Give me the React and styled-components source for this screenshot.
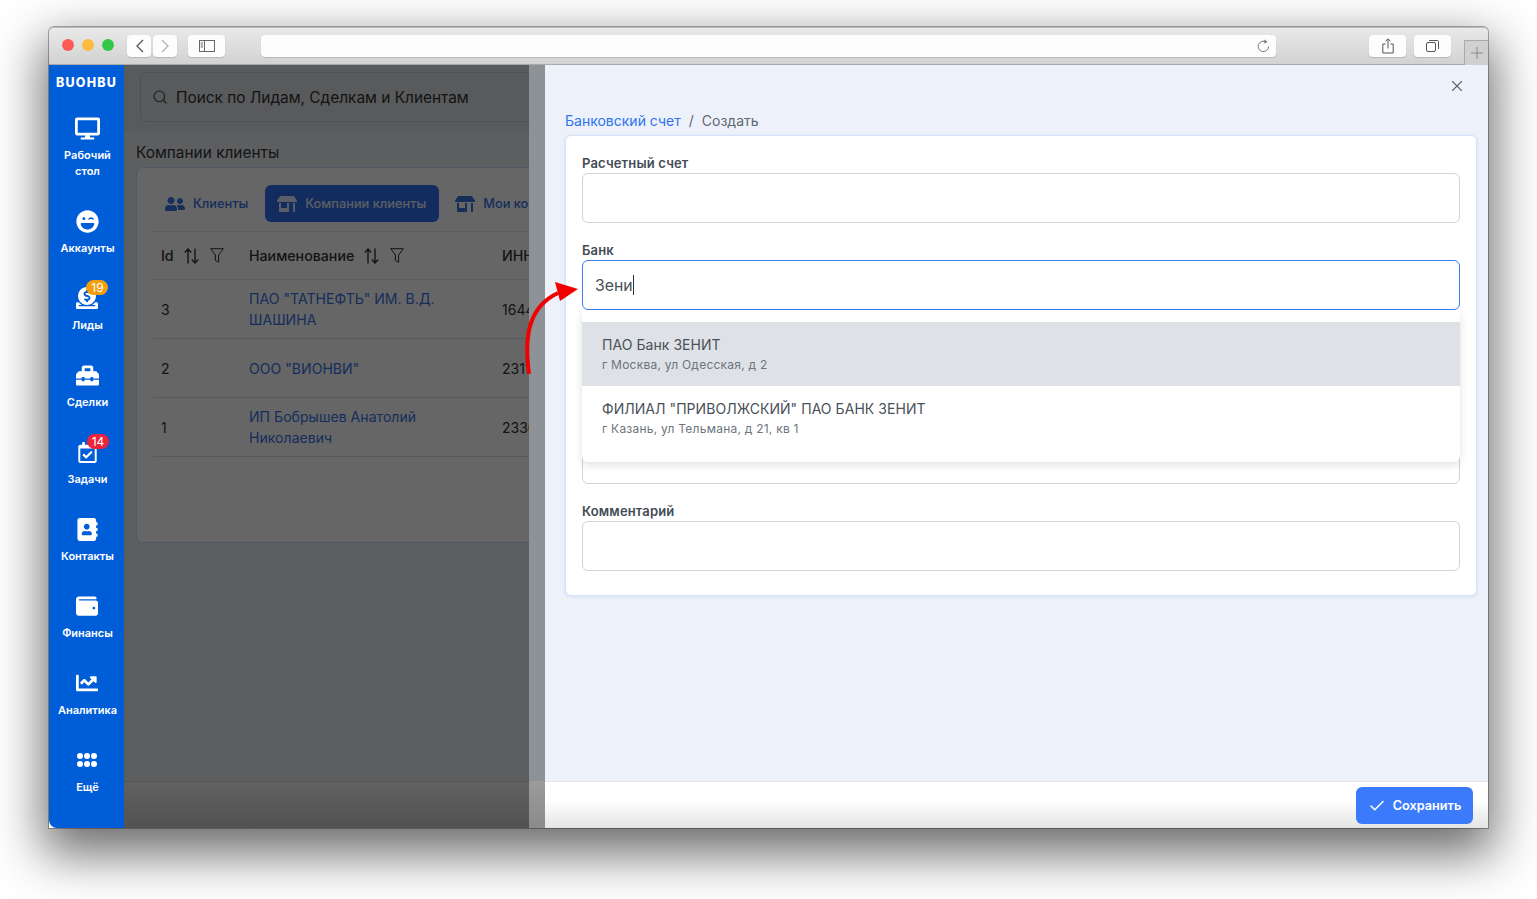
import React from 'react'
import styled, { createGlobalStyle } from 'styled-components'
import {
  FaDesktop, FaLaughWink, FaDonate, FaToolbox, FaRegCalendarCheck,
  FaAddressBook, FaWallet, FaChartLine, FaUserFriends, FaStoreAlt,
} from 'react-icons/fa'
import { FiSearch, FiX, FiCheck } from 'react-icons/fi'

const GlobalStyle = createGlobalStyle`
  html, body { margin: 0; padding: 0; background: #fff; }
  body { font-family: Inter, "Noto Sans", sans-serif; width: 1537px; height: 899px; overflow: hidden; }
  * { box-sizing: border-box; }
`

const navItems = [
  { label: <>Рабочий<br />стол</>, icon: <FaDesktop size={25} /> },
  { label: 'Аккаунты', icon: <FaLaughWink size={23} /> },
  { label: 'Лиды', icon: <FaDonate size={22} />, badge: '19', badgeColor: '#f59e0b' },
  { label: 'Сделки', icon: <FaToolbox size={23} /> },
  { label: 'Задачи', icon: <FaRegCalendarCheck size={21} />, badge: '14', badgeColor: '#f0233c' },
  { label: 'Контакты', icon: <FaAddressBook size={23} /> },
  { label: 'Финансы', icon: <FaWallet size={22} /> },
  { label: 'Аналитика', icon: <FaChartLine size={22} /> },
  { label: 'Ещё', icon: <DotsIcon /> },
]

const rows = [
  { id: '3', name: <>ПАО "ТАТНЕФТЬ" ИМ. В.Д.<br />ШАШИНА</>, inn: '1644003838' },
  { id: '2', name: 'ООО "ВИОНВИ"', inn: '2311230529' },
  { id: '1', name: <>ИП Бобрышев Анатолий<br />Николаевич</>, inn: '233008371800' },
]

function DotsIcon() {
  return (
    <svg width="20" height="14" viewBox="0 0 20 14" fill="currentColor">
      {[3, 10, 17].map(x => [3, 11].map(y => <circle key={x + '-' + y} cx={x} cy={y} r="3" />))}
    </svg>
  )
}

function SortIcon() {
  return (
    <svg width="15" height="16" viewBox="0 0 15 16" fill="none" stroke="currentColor" strokeWidth="1.4">
      <path d="M4 15.5V1M0.8 4.4L4 1l3.2 3.4" />
      <path d="M11 .5V15M7.8 11.6L11 15l3.2-3.4" />
    </svg>
  )
}

function FilterIcon() {
  return (
    <svg width="14" height="15" viewBox="0 0 14 15" fill="none" stroke="currentColor" strokeWidth="1">
      <path d="M.7.7h12.6L8.6 7v7.2L5.4 12.4V7z" strokeLinejoin="round" />
    </svg>
  )
}

function HeaderTools() {
  return (
    <HeadTools>
      <SortIcon />
      <FilterIcon />
    </HeadTools>
  )
}

function BankField({ label, focused, value }) {
  return (
    <Field>
      <FieldLabel>{label}</FieldLabel>
      <InputBox $focused={focused}>
        {value}
        {focused && <Caret />}
      </InputBox>
    </Field>
  )
}

export default function App() {
  return (
    <>
      <GlobalStyle />
      <Page>
        <Win>
          <Toolbar>
            <Lights>
              <Light $c="#fc5b57" />
              <Light $c="#fdbc40" />
              <Light $c="#34c84a" />
            </Lights>
            <NavPair>
              <ToolBtn $w={24}>
                <svg width="9" height="14" viewBox="0 0 9 14" fill="none" stroke="#555" strokeWidth="1.3"><path d="M8 1L2 7l6 6" /></svg>
              </ToolBtn>
              <ToolBtn $w={24}>
                <svg width="9" height="14" viewBox="0 0 9 14" fill="none" stroke="#b4b4b4" strokeWidth="1.3"><path d="M1 1l6 6-6 6" /></svg>
              </ToolBtn>
            </NavPair>
            <ToolBtn $w={37}>
              <svg width="16" height="12" viewBox="0 0 16 12" fill="none" stroke="#666" strokeWidth="1"><rect x=".5" y=".5" width="15" height="11" /><path d="M5.5 .5v11M1.7 3h2.3M1.7 5h2.3M1.7 7h2.3" /></svg>
            </ToolBtn>
            <UrlBar>
              <svg width="13" height="14" viewBox="0 0 13 14" fill="none" stroke="#777" strokeWidth="1"><path d="M9.2 3A5.2 5.2 0 1 0 11.6 7.4" /><path d="M7.4.6l3 2.2-3 1.9z" fill="#777" stroke="none" /></svg>
            </UrlBar>
            <ToolBtn $w={37}>
              <svg width="12" height="16" viewBox="0 0 12 16" fill="none" stroke="#555" strokeWidth="1"><path d="M3.5 6H.8v9h10.4V6H8.5M6 10.5V1M3.6 3.2L6 .8l2.4 2.4" /></svg>
            </ToolBtn>
            <ToolBtn $w={37} $ml={8}>
              <svg width="13" height="12" viewBox="0 0 13 12" fill="none" stroke="#555" strokeWidth="1"><rect x=".5" y="2.5" width="9" height="9" rx="1.5" /><path d="M3 .5h8.5a1 1 0 0 1 1 1V9" /></svg>
            </ToolBtn>
            <PlusTab>
              <svg width="12" height="12" viewBox="0 0 12 12" stroke="#8a8a8a" strokeWidth="1"><path d="M6 0v12M0 6h12" /></svg>
            </PlusTab>
          </Toolbar>

          <Body>
            <Sidebar>
              <Logo>BUOHBU</Logo>
              <NavList>
                {navItems.map((item, index) => (
                  <NavItem key={index}>
                    <NavIcon>
                      {item.icon}
                      {item.badge && <Badge $c={item.badgeColor}>{item.badge}</Badge>}
                    </NavIcon>
                    <NavLabel>{item.label}</NavLabel>
                  </NavItem>
                ))}
              </NavList>
            </Sidebar>

            <Main>
              <TopBar>
                <SearchBox>
                  <FiSearch size={16} color="#444" strokeWidth={1.6} />
                  <SearchText>Поиск по Лидам, Сделкам и Клиентам</SearchText>
                </SearchBox>
              </TopBar>
              <Content>
                <PageTitle>Компании клиенты</PageTitle>
                <Card>
                  <Tabs>
                    <Tab><FaUserFriends size={20} />Клиенты</Tab>
                    <Tab $active><FaStoreAlt size={20} />Компании клиенты</Tab>
                    <Tab><FaStoreAlt size={20} />Мои компании</Tab>
                  </Tabs>
                  <HeadRow>
                    <IdCell>Id<HeaderTools /></IdCell>
                    <NameCell>Наименование<HeaderTools /></NameCell>
                    <InnCell>ИНН</InnCell>
                  </HeadRow>
                  {rows.map(row => (
                    <Row key={row.id}>
                      <IdCell>{row.id}</IdCell>
                      <NameCell><NameLink>{row.name}</NameLink></NameCell>
                      <InnCell>{row.inn}</InnCell>
                    </Row>
                  ))}
                </Card>
              </Content>
              <BottomBar />
            </Main>

            <Backdrop />

            <Drawer>
              <Gutter />
              <Panel>
                <CloseRow><FiX size={18} strokeWidth={1.5} /></CloseRow>
                <PanelBody>
                  <Crumbs>
                    <CrumbLink>Банковский счет</CrumbLink>
                    <span>/</span>
                    <span>Создать</span>
                  </Crumbs>
                  <FormCard>
                    <BankField label="Расчетный счет" />
                    <BankField label="Банк" focused value="Зени" />
                    <BankField />
                    <BankField />
                    <BankField label="Комментарий" />
                    <Suggestions>
                      <Suggestion $active>
                        <SugTitle>ПАО Банк ЗЕНИТ</SugTitle>
                        <SugSub>г Москва, ул Одесская, д 2</SugSub>
                      </Suggestion>
                      <Suggestion>
                        <SugTitle>ФИЛИАЛ "ПРИВОЛЖСКИЙ" ПАО БАНК ЗЕНИТ</SugTitle>
                        <SugSub>г Казань, ул Тельмана, д 21, кв 1</SugSub>
                      </Suggestion>
                    </Suggestions>
                  </FormCard>
                </PanelBody>
                <PanelFooter>
                  <SaveBtn><FiCheck size={18} strokeWidth={2} />Сохранить</SaveBtn>
                </PanelFooter>
              </Panel>
            </Drawer>

            <ArrowMark width="62" height="100" viewBox="0 0 62 100" fill="none">
              <path d="M9 92C4 55 8 25 38 11" stroke="#f00000" strokeWidth="4" />
              <path d="M35 0L58 7 40 19z" fill="#f00000" />
            </ArrowMark>
          </Body>
        </Win>
      </Page>
    </>
  )
}

const Page = styled.div`
  width: 1537px;
  height: 899px;
  padding: 27px 49px 0;
`

const Win = styled.div`
  width: 1439px;
  height: 801px;
  display: flex;
  flex-direction: column;
  border-radius: 5px 5px 0 0;
  box-shadow: 0 0 0 1px rgba(0, 0, 0, 0.3), 0 20px 50px 6px rgba(0, 0, 0, 0.58);
`

const Toolbar = styled.div`
  height: 38px;
  flex: none;
  display: flex;
  align-items: flex-start;
  padding-top: 7px;
  background: linear-gradient(#e9e9e9, #d2d2d2);
  border-top: 1px solid #b9b9b9;
  border-bottom: 1px solid #a9a9a9;
  border-radius: 5px 5px 0 0;
`

const Lights = styled.div`
  display: flex;
  gap: 8px;
  padding: 4px 0 0 13px;
  width: 78px;
`

const Light = styled.span`
  width: 12px;
  height: 12px;
  border-radius: 50%;
  background: ${p => p.$c};
`

const NavPair = styled.div`
  display: flex;
  gap: 2px;
  margin-right: 11px;
`

const ToolBtn = styled.div`
  width: ${p => p.$w}px;
  height: 22px;
  margin-left: ${p => p.$ml || 0}px;
  display: flex;
  align-items: center;
  justify-content: center;
  background: #fdfdfd;
  border-radius: 4px;
  box-shadow: 0 1px 1px rgba(0, 0, 0, 0.15);
`

const UrlBar = styled.div`
  width: 1015px;
  height: 22px;
  margin: 0 93px 0 36px;
  display: flex;
  align-items: center;
  justify-content: flex-end;
  padding-right: 6px;
  background: #fdfdfd;
  border-radius: 4px;
  box-shadow: 0 1px 1px rgba(0, 0, 0, 0.15);
`

const PlusTab = styled.div`
  width: 24px;
  height: 25px;
  margin: 5px 0 0 13px;
  display: flex;
  align-items: center;
  justify-content: center;
  background: #d0d0d0;
  border: 1px solid #aaa;
  border-right: none;
  border-bottom: none;
`

const Body = styled.div`
  position: relative;
  flex: 1;
  display: flex;
  min-height: 0;
  overflow: hidden;
`

const Sidebar = styled.div`
  width: 75px;
  flex: none;
  display: flex;
  flex-direction: column;
  align-items: center;
  padding-left: 2px;
  background: #005dd8;
  color: #fff;
  border-bottom-left-radius: 8px;
  z-index: 3;
`

const Logo = styled.div`
  height: 34px;
  padding: 9px 2px 0 0;
  font-size: 12.5px;
  line-height: 17px;
  font-weight: 800;
  letter-spacing: 1.2px;
  white-space: nowrap;
`

const NavList = styled.div`
  display: flex;
  flex-direction: column;
  align-items: center;
  gap: 30px;
  padding-top: 17px;
`

const NavItem = styled.div`
  display: flex;
  flex-direction: column;
  align-items: center;
  gap: 7px;
`

const NavIcon = styled.div`
  position: relative;
  height: 24px;
  display: flex;
  align-items: center;
  justify-content: center;
`

const Badge = styled.span`
  position: absolute;
  top: -6px;
  left: 10px;
  min-width: 22px;
  height: 15px;
  padding: 0 4px;
  border-radius: 8px;
  background: ${p => p.$c};
  color: #fff;
  font-size: 12px;
  line-height: 15px;
  text-align: center;
`

const NavLabel = styled.div`
  font-size: 11px;
  line-height: 16px;
  font-weight: 600;
  text-align: center;
  white-space: nowrap;
`

const Main = styled.div`
  flex: 1;
  min-width: 0;
  display: flex;
  flex-direction: column;
  background: #e9ebee;
`

const TopBar = styled.div`
  height: 66px;
  flex: none;
  padding: 7px 0 0 16px;
  background: #dfe1e4;
`

const SearchBox = styled.div`
  width: 500px;
  height: 50px;
  display: flex;
  align-items: center;
  gap: 8px;
  padding-left: 11px;
  border: 1px solid #c6c9ce;
  border-radius: 6px;
`

const SearchText = styled.span`
  font-size: 15.4px;
  color: #333;
`

const Content = styled.div`
  flex: 1;
  padding: 12px 12px 0;
`

const PageTitle = styled.div`
  font-size: 15.4px;
  line-height: 19px;
  color: #333;
  margin-bottom: 5px;
`

const Card = styled.div`
  width: 700px;
  height: 376px;
  padding: 17px 16px 0 16px;
  background: #fff;
  border: 1px solid #c9dcf8;
  border-radius: 6px;
  overflow: hidden;
`

const Tabs = styled.div`
  display: flex;
  gap: 4px;
  height: 47px;
  border-bottom: 1px solid #e2e5e9;
`

const Tab = styled.div`
  height: 37px;
  display: flex;
  align-items: center;
  gap: 8px;
  padding: 0 13px 0 12px;
  border-radius: 6px;
  font-size: 12.8px;
  font-weight: 500;
  white-space: nowrap;
  color: ${p => (p.$active ? '#e4ecfb' : '#3573e6')};
  background: ${p => (p.$active ? '#2f6fed' : 'transparent')};
`

const HeadRow = styled.div`
  display: flex;
  align-items: center;
  height: 48px;
  font-size: 14.2px;
  font-weight: 500;
  color: #333;
  border-bottom: 1px solid #e2e5e9;
`

const Row = styled.div`
  display: flex;
  align-items: center;
  height: 59px;
  font-size: 14px;
  line-height: 21px;
  color: #333;
  border-bottom: 1px solid #dcdfe3;
`

const IdCell = styled.div`
  width: 96px;
  flex: none;
  display: flex;
  align-items: center;
  padding-left: 8px;
`

const NameCell = styled.div`
  width: 253px;
  flex: none;
  display: flex;
  align-items: center;
`

const InnCell = styled.div`
  white-space: nowrap;
`

const HeadTools = styled.span`
  display: inline-flex;
  align-items: center;
  gap: 11px;
  margin-left: 10px;
`

const NameLink = styled.span`
  color: #3573e6;
  font-weight: 400;
  letter-spacing: 0.05px;
`

const BottomBar = styled.div`
  height: 47px;
  flex: none;
  background: linear-gradient(to bottom, #f2f2f2, #cdcdcd);
  border-top: 1px solid #d0d3d8;
`

const Backdrop = styled.div`
  position: absolute;
  top: 0;
  bottom: 0;
  left: 75px;
  right: 0;
  z-index: 1;
  background: rgba(0, 0, 0, 0.6);
`

const Drawer = styled.div`
  position: absolute;
  top: 0;
  right: 0;
  bottom: 0;
  width: 959px;
  display: flex;
  z-index: 2;
`

const Gutter = styled.div`
  width: 16px;
  flex: none;
  background: linear-gradient(
    to bottom,
    #8d9296 calc(100% - 47px),
    #9b9b9b calc(100% - 47px),
    #8b8b8b 100%
  );
`

const Panel = styled.div`
  flex: 1;
  display: flex;
  flex-direction: column;
  min-width: 0;
  background: #ecf1fa;
`

const CloseRow = styled.div`
  height: 44px;
  flex: none;
  display: flex;
  justify-content: flex-end;
  align-items: center;
  padding: 0 22px 2px 0;
  color: #5d6570;
`

const PanelBody = styled.div`
  flex: 1;
  padding: 0 11px 0 20px;
  min-height: 0;
`

const Crumbs = styled.div`
  height: 23px;
  margin-bottom: 3px;
  display: flex;
  align-items: center;
  gap: 8px;
  font-size: 14px;
  color: #5f6874;
`

const CrumbLink = styled.span`
  color: #2f74ef;
`

const FormCard = styled.div`
  position: relative;
  height: 461px;
  padding: 20px 16px 0;
  display: flex;
  flex-direction: column;
  gap: 20px;
  background: #fff;
  border: 1px solid #d4e3f8;
  border-radius: 6px;
  box-shadow: 0 1px 3px rgba(60, 100, 170, 0.12);
`

const Field = styled.div`
  display: flex;
  flex-direction: column;
  gap: 2px;
`

const FieldLabel = styled.div`
  height: 15px;
  font-size: 13px;
  line-height: 15px;
  font-weight: 600;
  letter-spacing: 0.15px;
  color: #444b55;
`

const InputBox = styled.div`
  height: 50px;
  display: flex;
  align-items: center;
  padding-left: 12px;
  font-size: 15.8px;
  color: #495057;
  background: #fff;
  border: 1px solid ${p => (p.$focused ? '#3b7df6' : '#ced4da')};
  border-radius: 6px;
`

const Caret = styled.span`
  width: 1px;
  height: 20px;
  background: #333;
`

const Suggestions = styled.div`
  position: absolute;
  top: 174px;
  left: 16px;
  right: 16px;
  height: 152px;
  padding: 12px 0;
  background: #fff;
  border-radius: 0 0 6px 6px;
  box-shadow: 0 3px 8px rgba(0, 0, 0, 0.12);
`

const Suggestion = styled.div`
  height: 64px;
  padding: 14px 20px 0;
  background: ${p => (p.$active ? '#dee2e6' : '#fff')};
`

const SugTitle = styled.div`
  font-size: 14px;
  line-height: 18px;
  letter-spacing: 0.05px;
  color: #495057;
`

const SugSub = styled.div`
  margin-top: 3px;
  font-size: 12px;
  line-height: 15px;
  letter-spacing: 0.24px;
  color: #6c757d;
`

const PanelFooter = styled.div`
  height: 47px;
  flex: none;
  display: flex;
  justify-content: flex-end;
  padding: 5px 15px 0 0;
  background: linear-gradient(to bottom, #fff 40%, #e4e4e4);
  border-top: 1px solid #e3e6ea;
`

const SaveBtn = styled.div`
  width: 117px;
  height: 37px;
  display: flex;
  align-items: center;
  justify-content: center;
  gap: 7px;
  background: #3b7bfb;
  color: #fff;
  font-size: 12.7px;
  font-weight: 600;
  border-radius: 6px;
`

const ArrowMark = styled.svg`
  position: absolute;
  left: 471px;
  top: 217px;
  z-index: 4;
`
